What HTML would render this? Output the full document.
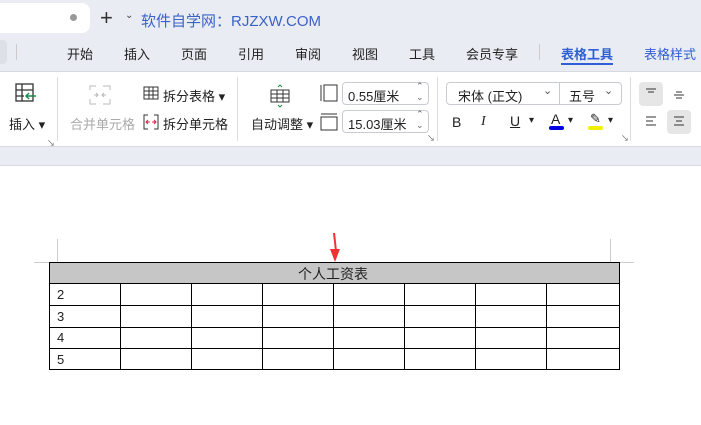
<!DOCTYPE html><html><head><meta charset="utf-8"><style>
*{margin:0;padding:0;box-sizing:border-box}
body{width:701px;height:425px;overflow:hidden;background:#fff;font-family:"Liberation Sans","Noto Sans CJK SC",sans-serif;position:relative;font-size:13px;color:#222}
.a{position:absolute;white-space:nowrap}
.box{position:absolute;border:1px solid #c8ccd2;border-radius:4px;background:#fff}
</style></head><body>
<div class="a" style="left:0;top:0;width:701px;height:72px;background:#e9ecf2"></div>
<div class="a" style="left:-10px;top:3px;width:100px;height:30px;background:#fff;border-radius:8px"></div>
<div class="a" style="left:70px;top:14px;width:7px;height:7px;border-radius:50%;background:#999"></div>
<div class="a" style="left:0;top:40px;width:7px;height:24px;background:#dde1e7;border-radius:0 4px 4px 0"></div>
<div class="a" style="left:16px;top:44px;width:1px;height:16px;background:#ccc"></div>
<div class="a" style="left:100px;top:5px;font-size:22px;color:#333">+</div>
<div class="a" style="left:125px;top:10px;font-size:10px;color:#444">⌄</div>
<div class="a" style="left:141px;top:10px;font-size:15px;color:#3a63c8">软件自学网：RJZXW.COM</div>
<div class="a" style="left:67px;top:44px;font-size:13px;word-spacing:0">开始</div>
<div class="a" style="left:124px;top:44px">插入</div>
<div class="a" style="left:181px;top:44px">页面</div>
<div class="a" style="left:238px;top:44px">引用</div>
<div class="a" style="left:295px;top:44px">审阅</div>
<div class="a" style="left:352px;top:44px">视图</div>
<div class="a" style="left:409px;top:44px">工具</div>
<div class="a" style="left:466px;top:44px">会员专享</div>
<div class="a" style="left:539px;top:44px;width:1px;height:16px;background:#ccc"></div>
<div class="a" style="left:561px;top:44px;color:#2f5ed6;font-weight:bold">表格工具</div>
<div class="a" style="left:561px;top:63px;width:52px;height:2px;background:#2f5ed6"></div>
<div class="a" style="left:644px;top:44px;color:#2f5ed6">表格样式</div>
<div class="a" style="left:0;top:71px;width:701px;height:1px;background:#d6d9de"></div>
<div class="a" style="left:0;top:146px;width:701px;height:20px;background:#e9ecf2;border-top:1px solid #d6d9de;border-bottom:1px solid #d6d9de"></div>
<!-- ribbon -->
<svg class="a" style="left:14px;top:82px" width="24" height="22"><rect x="2" y="2" width="17" height="17" fill="none" stroke="#333" stroke-width="1.3"/><path d="M2 8H19M2 14H10M8 2V19" stroke="#333" stroke-width="1.3"/><path d="M22 14H12M15 11L12 14L15 17" stroke="#1a8a4a" stroke-width="1.4" fill="none"/></svg>
<div class="a" style="left:9px;top:114px">插入 ▾</div>
<div class="a" style="left:47px;top:138px;font-size:8px;color:#666">↘</div>
<div class="a" style="left:57px;top:77px;width:1px;height:64px;background:#ddd"></div>
<svg class="a" style="left:89px;top:85px" width="22" height="20"><path d="M1 5V1H7M14 1H21V5M1 14V19H7M14 19H21V14M5 10H9M7 8L9 10L7 12M17 10H13M15 8L13 10L15 12" stroke="#bbb" fill="none"/></svg>
<div class="a" style="left:70px;top:114px;color:#aaa">合并单元格</div>
<svg class="a" style="left:143px;top:86px" width="16" height="14"><rect x="1" y="1" width="14" height="12" fill="none" stroke="#333"/><path d="M1 5H15M1 9H15M6 1V13M10 1V13" stroke="#333"/></svg>
<div class="a" style="left:163px;top:86px">拆分表格 ▾</div>
<svg class="a" style="left:143px;top:114px" width="16" height="16"><path d="M5 1H1V15H5M11 1H15V15H11" stroke="#333" fill="none"/><path d="M3 8H7M5 6L3 8L5 10M9 8H13M11 6L13 8L11 10" stroke="#d0204a" fill="none"/></svg>
<div class="a" style="left:163px;top:114px">拆分单元格</div>
<div class="a" style="left:237px;top:77px;width:1px;height:64px;background:#ddd"></div>
<svg class="a" style="left:268px;top:84px" width="24" height="24"><rect x="3" y="6" width="18" height="12" fill="none" stroke="#333"/><path d="M3 10H21M3 14H21M9 6V18M15 6V18" stroke="#333"/><path d="M10 3L12 1L14 3M10 21L12 23L14 21" stroke="#1a8a4a" fill="none"/></svg>
<div class="a" style="left:251px;top:114px">自动调整 ▾</div>
<svg class="a" style="left:320px;top:84px" width="18" height="18"><path d="M1 1V17M4 1H17V17H4Z" stroke="#333" fill="none"/></svg>
<svg class="a" style="left:320px;top:113px" width="18" height="18"><path d="M1 1H17M1 4H17V17H1Z" stroke="#333" fill="none"/></svg>
<div class="box" style="left:342px;top:82px;width:87px;height:23px"></div>
<div class="a" style="left:348px;top:86px">0.55厘米</div>
<div class="a" style="left:416px;top:81px;font-size:9px;color:#666;line-height:11px">⌃<br>⌄</div>
<div class="box" style="left:342px;top:110px;width:87px;height:23px"></div>
<div class="a" style="left:348px;top:114px">15.03厘米</div>
<div class="a" style="left:416px;top:109px;font-size:9px;color:#666;line-height:11px">⌃<br>⌄</div>
<div class="a" style="left:427px;top:133px;font-size:8px;color:#666">↘</div>
<div class="a" style="left:437px;top:77px;width:1px;height:64px;background:#ddd"></div>
<div class="box" style="left:446px;top:82px;width:176px;height:23px"></div>
<div class="a" style="left:559px;top:83px;width:1px;height:21px;background:#c8ccd2"></div>
<div class="a" style="left:458px;top:86px">宋体 (正文)</div>
<div class="a" style="left:543px;top:84px;font-size:11px;color:#555">⌄</div>
<div class="a" style="left:569px;top:86px">五号</div>
<div class="a" style="left:604px;top:84px;font-size:11px;color:#555">⌄</div>
<div class="a" style="left:452px;top:114px;font-size:14px">B</div>
<div class="a" style="left:481px;top:114px;font-size:14px;font-style:italic;font-family:'Liberation Serif',serif">I</div>
<div class="a" style="left:510px;top:113px;font-size:14px;text-decoration:underline">U</div><div class="a" style="left:529px;top:115px;font-size:10px">▾</div>
<div class="a" style="left:551px;top:111px;font-size:14px">A</div><div class="a" style="left:549px;top:126px;width:15px;height:4px;background:#0000e0;border-radius:2px"></div><div class="a" style="left:568px;top:115px;font-size:10px">▾</div>
<div class="a" style="left:590px;top:111px;font-size:13px">✎</div><div class="a" style="left:588px;top:126px;width:15px;height:4px;background:#f0f000;border-radius:2px"></div><div class="a" style="left:608px;top:115px;font-size:10px">▾</div>
<div class="a" style="left:621px;top:133px;font-size:8px;color:#666">↘</div>
<div class="a" style="left:630px;top:77px;width:1px;height:64px;background:#ddd"></div>
<div class="a" style="left:639px;top:82px;width:24px;height:24px;background:#e6e6e6;border-radius:4px"></div>
<svg class="a" style="left:645px;top:87px" width="12" height="12"><path d="M1 2H11M3 5H9" stroke="#333"/></svg>
<svg class="a" style="left:673px;top:88px" width="12" height="12"><path d="M3 4H9M1 7H11M3 10H9" stroke="#333"/></svg>
<svg class="a" style="left:645px;top:115px" width="12" height="12"><path d="M1 2H11M1 6H8M1 10H11" stroke="#333"/></svg>
<div class="a" style="left:667px;top:110px;width:24px;height:24px;background:#e6e6e6;border-radius:4px"></div>
<svg class="a" style="left:673px;top:115px" width="12" height="12"><path d="M1 2H11M3 6H9M1 10H11" stroke="#333"/></svg>
<!-- document -->
<div class="a" style="left:57px;top:239px;width:1px;height:24px;background:#ccc"></div>
<div class="a" style="left:610px;top:239px;width:1px;height:24px;background:#ccc"></div>
<div class="a" style="left:34px;top:262px;width:600px;height:1px;background:#ccc"></div>
<div class="a" style="left:49px;top:262px;width:571px;height:108px;border:1px solid #000"></div>
<div class="a" style="left:50px;top:263px;width:569px;height:21px;background:#c6c6c6;border-bottom:1px solid #000"></div>
<div class="a" style="left:298px;top:264px;font-size:14px">个人工资表</div>
<svg class="a" style="left:49px;top:284px" width="571" height="86"><g stroke="#000" stroke-width="1"><path d="M0 21.5H571M0 43.5H571M0 64.5H571"/><path d="M71.5 0V86M142.5 0V86M213.5 0V86M284.5 0V86M355.5 0V86M426.5 0V86M497.5 0V86"/></g></svg>
<div class="a" style="left:57px;top:287px">2</div>
<div class="a" style="left:57px;top:309px">3</div>
<div class="a" style="left:57px;top:330px">4</div>
<div class="a" style="left:57px;top:352px">5</div>
<svg class="a" style="left:328px;top:233px" width="14" height="30"><path d="M6 0L8 18" stroke="#e33" stroke-width="2"/><path d="M2 16L12 16L7 29Z" fill="#e33"/></svg>
</body></html>
